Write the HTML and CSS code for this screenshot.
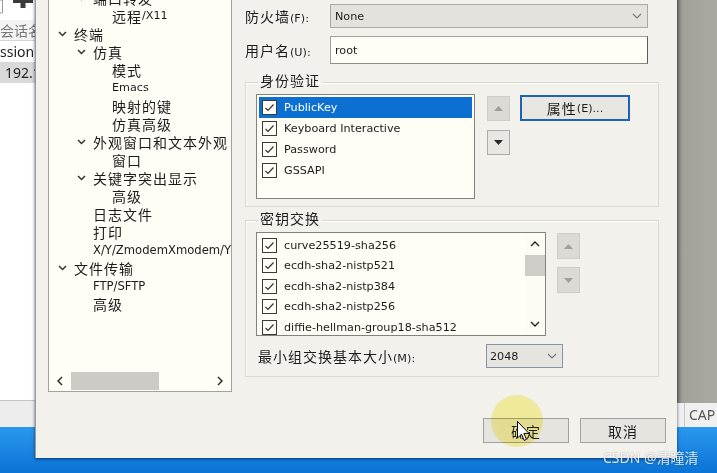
FILE: index.html
```html
<!DOCTYPE html>
<html>
<head>
<meta charset="utf-8">
<link rel="stylesheet" href="styles.css">
</head>
<body>
<div class="desktop">
  <div class="taskbar"></div>

  <div class="bgapp">
    <div class="bg-toolbar">
      <svg width="36" height="20" viewBox="0 0 36 20"><path d="M0 0H2.5V13H0" fill="none" stroke="#9a9a9a" stroke-width="1"/><rect x="13" y="0" width="20" height="3" fill="#3a3a3a"/><rect x="20.5" y="0" width="5" height="8" fill="#3a3a3a"/></svg>
    </div>
    <div class="bg-tab"><span class="zh">会话名</span></div>
    <div class="bg-row">ssion</div>
    <div class="bg-row sel">192.168</div>
    <div class="bg-spacer"></div>
    <div class="bg-foot"></div>
  </div>

  <div class="rightapp">
    <div class="ra-dark"></div>
    <div class="ra-status"><span class="ra-gap"></span><span class="ra-cap">CAP</span></div>
  </div>

  <div class="dialog">
    <div class="dlg-main">
      <div class="tree">
        <div class="tree-items">
          <div class="node l0"><i class="tw"><svg viewBox="0 0 9 6"><path d="M1 1l3.5 3.5L8 1"/></svg></i><span class="zh">连接</span></div>
          <div class="node l1"><i class="tw"><svg viewBox="0 0 9 6"><path d="M1 1l3.5 3.5L8 1"/></svg></i><span class="zh">端口转发</span></div>
          <div class="node l2"><i class="tw"></i><span class="zh">远程</span><span>/X11</span></div>
          <div class="node l0"><i class="tw"><svg viewBox="0 0 9 6"><path d="M1 1l3.5 3.5L8 1"/></svg></i><span class="zh">终端</span></div>
          <div class="node l1"><i class="tw"><svg viewBox="0 0 9 6"><path d="M1 1l3.5 3.5L8 1"/></svg></i><span class="zh">仿真</span></div>
          <div class="node l2"><i class="tw"></i><span class="zh">模式</span></div>
          <div class="node l2"><i class="tw"></i><span>Emacs</span></div>
          <div class="node l2"><i class="tw"></i><span class="zh">映射的键</span></div>
          <div class="node l2"><i class="tw"></i><span class="zh">仿真高级</span></div>
          <div class="node l1"><i class="tw"><svg viewBox="0 0 9 6"><path d="M1 1l3.5 3.5L8 1"/></svg></i><span class="zh">外观窗口和文本外观</span></div>
          <div class="node l2"><i class="tw"></i><span class="zh">窗口</span></div>
          <div class="node l1"><i class="tw"><svg viewBox="0 0 9 6"><path d="M1 1l3.5 3.5L8 1"/></svg></i><span class="zh">关键字突出显示</span></div>
          <div class="node l2"><i class="tw"></i><span class="zh">高级</span></div>
          <div class="node l1"><i class="tw"></i><span class="zh">日志文件</span></div>
          <div class="node l1"><i class="tw"></i><span class="zh">打印</span></div>
          <div class="node l1"><i class="tw"></i><span class="big">X/Y/ZmodemXmodem/Y</span></div>
          <div class="node l0"><i class="tw"><svg viewBox="0 0 9 6"><path d="M1 1l3.5 3.5L8 1"/></svg></i><span class="zh">文件传输</span></div>
          <div class="node l1"><i class="tw"></i><span class="big">FTP/SFTP</span></div>
          <div class="node l1"><i class="tw"></i><span class="zh">高级</span></div>
        </div>
        <div class="hscroll">
          <i class="harr"><svg viewBox="0 0 6 10"><path d="M5 1L1 5l4 4"/></svg></i>
          <div class="hthumb"></div>
          <div class="hspace"></div>
          <i class="harr"><svg viewBox="0 0 6 10"><path d="M1 1l4 4-4 4"/></svg></i>
        </div>
      </div>

      <div class="panel">
        <div class="frow">
          <div class="flabel"><span class="zh">防火墙</span>(F):</div>
          <div class="combo"><span>None</span><svg class="cchev" viewBox="0 0 10 6"><path d="M1 1l4 4 4-4"/></svg></div>
        </div>
        <div class="frow r2">
          <div class="flabel"><span class="zh">用户名</span>(U):</div>
          <div class="field">root</div>
        </div>

        <fieldset class="group g1">
          <legend><span class="zh">身份验证</span></legend>
          <div class="ginner">
            <div class="lbox">
              <div class="item sel"><span class="cb"><svg viewBox="0 0 13 13"><path d="M2.5 7l2.5 2.5L10.5 3.5"/></svg></span>PublicKey</div>
              <div class="item"><span class="cb"><svg viewBox="0 0 13 13"><path d="M2.5 7l2.5 2.5L10.5 3.5"/></svg></span>Keyboard Interactive</div>
              <div class="item"><span class="cb"><svg viewBox="0 0 13 13"><path d="M2.5 7l2.5 2.5L10.5 3.5"/></svg></span>Password</div>
              <div class="item"><span class="cb"><svg viewBox="0 0 13 13"><path d="M2.5 7l2.5 2.5L10.5 3.5"/></svg></span>GSSAPI</div>
            </div>
            <div class="udcol">
              <div class="ud"><svg viewBox="0 0 9 5"><path d="M0 5L4.5 0 9 5Z"/></svg></div>
              <div class="ud on"><svg viewBox="0 0 9 5"><path d="M0 0L4.5 5 9 0Z"/></svg></div>
            </div>
            <div class="propbtn"><span class="zh">属性</span>(E)...</div>
          </div>
        </fieldset>

        <fieldset class="group g2">
          <legend><span class="zh">密钥交换</span></legend>
          <div class="ginner">
            <div class="lbox2">
              <div class="items">
                <div class="item i2"><span class="cb"><svg viewBox="0 0 13 13"><path d="M2.5 7l2.5 2.5L10.5 3.5"/></svg></span>curve25519-sha256</div>
                <div class="item i2"><span class="cb"><svg viewBox="0 0 13 13"><path d="M2.5 7l2.5 2.5L10.5 3.5"/></svg></span>ecdh-sha2-nistp521</div>
                <div class="item i2"><span class="cb"><svg viewBox="0 0 13 13"><path d="M2.5 7l2.5 2.5L10.5 3.5"/></svg></span>ecdh-sha2-nistp384</div>
                <div class="item i2"><span class="cb"><svg viewBox="0 0 13 13"><path d="M2.5 7l2.5 2.5L10.5 3.5"/></svg></span>ecdh-sha2-nistp256</div>
                <div class="item i2"><span class="cb"><svg viewBox="0 0 13 13"><path d="M2.5 7l2.5 2.5L10.5 3.5"/></svg></span>diffie-hellman-group18-sha512</div>
              </div>
              <div class="vsb">
                <i class="varr"><svg viewBox="0 0 10 6"><path d="M1 5l4-4 4 4"/></svg></i>
                <div class="vthumb"></div>
                <div class="vspace"></div>
                <i class="varr"><svg viewBox="0 0 10 6"><path d="M1 1l4 4 4-4"/></svg></i>
              </div>
            </div>
            <div class="udcol u2">
              <div class="ud t"><svg viewBox="0 0 9 5"><path d="M0 5L4.5 0 9 5Z"/></svg></div>
              <div class="ud t"><svg viewBox="0 0 9 5"><path d="M0 0L4.5 5 9 0Z"/></svg></div>
            </div>
          </div>
          <div class="minrow">
            <div class="minlabel"><span class="zh">最小组交换基本大小</span>(M):</div>
            <div class="combo2"><span>2048</span><svg class="cchev" viewBox="0 0 10 6"><path d="M1 1l4 4 4-4"/></svg></div>
          </div>
        </fieldset>
      </div>
    </div>
    <div class="dlg-foot">
      <div class="btn"><span class="zh">确定</span></div>
      <div class="btn"><span class="zh">取消</span></div>
    </div>
  </div>

  <div class="halo"></div>
  <svg class="cursor" width="13" height="21" viewBox="0 0 13 21"><path d="M0.5 0.5V17l4-3.8 2.6 6.2 2.4-1-2.6-6H12Z" fill="#fff" stroke="#000" stroke-width="1"/></svg>
  <div class="watermark">CSDN @<span class="wzh">清瞳清</span></div>
</div>
</body>
</html>
```

FILE: styles.css
```css
html, body {
  margin: 0;
  padding: 0;
}
body {
  width: 717px;
  height: 473px;
  overflow: hidden;
  font-family: "DejaVu Sans", "Noto Sans CJK SC", sans-serif;
  font-size: 11.2px;
  color: #1c1c1c;
}
.zh {
  font-family: "Noto Sans CJK SC", sans-serif;
  font-size: 14px;
  letter-spacing: 1px;
}
.desktop {
  position: relative;
  width: 717px;
  height: 473px;
  overflow: hidden;
  background: #ffffff;
}
.taskbar {
  position: absolute;
  left: 0;
  right: 0;
  top: 427px;
  bottom: 0;
  background: linear-gradient(#2a98ef, #0a73d5);
}

/* background app, left */
.bgapp {
  position: absolute;
  left: 0;
  top: 0;
  width: 36px;
  height: 427px;
  display: flex;
  flex-direction: column;
  background: #ffffff;
  overflow: hidden;
}
.bg-toolbar {
  height: 20px;
}
.bg-toolbar svg {
  display: block;
}
.bg-tab {
  height: 20px;
  line-height: 20px;
  border-bottom: 1px solid #d4d4d4;
  background: #f4f4f4;
  color: #777;
  white-space: nowrap;
}
.bg-tab .zh {
  font-size: 14px;
  letter-spacing: 0;
}
.bg-row {
  height: 21px;
  line-height: 21px;
  font-family: "Noto Sans", sans-serif;
  font-size: 14px;
  color: #222;
  white-space: nowrap;
}
.bg-row.sel {
  background: #d9d9d9;
  padding-left: 5px;
}
.bg-spacer {
  flex: 1;
}
.bg-foot {
  height: 26px;
  border-top: 1px solid #c4c4c4;
  background: #ededed;
}

/* right background app */
.rightapp {
  position: absolute;
  left: 677px;
  top: 0;
  width: 40px;
  height: 427px;
  display: flex;
  flex-direction: column;
}
.ra-dark {
  flex: 1;
  background: linear-gradient(to right, #77766f, #a2a19a 6px, #aaa9a2);
}
.ra-status {
  height: 24px;
  display: flex;
  background: #f0f0f0;
}
.ra-gap {
  width: 7px;
  border-right: 1px solid #c6c6c6;
}
.ra-cap {
  padding-left: 4px;
  font-family: "Noto Sans", sans-serif;
  font-size: 14px;
  line-height: 24px;
  color: #555;
}

/* dialog */
.dialog {
  position: absolute;
  left: 35px;
  top: -40px;
  width: 642px;
  height: 498px;
  box-sizing: border-box;
  background: #f2f1ec;
  border-left: 1px solid #9b9a95;
  box-shadow: 0 1px 3px rgba(0, 20, 60, 0.7);
  padding: 10px 11px 0 12px;
}
.dlg-main {
  display: flex;
  gap: 13px;
  height: 422px;
}

/* tree */
.tree {
  width: 184px;
  box-sizing: border-box;
  border: 1px solid #a3a19b;
  background: #fffdf6;
  display: flex;
  flex-direction: column;
}
.tree-items {
  flex: 1;
  overflow: hidden;
}
.node {
  height: 18px;
  display: flex;
  align-items: center;
  white-space: nowrap;
  line-height: 16px;
}
.node.l0 { padding-left: 6px; }
.node.l1 { padding-left: 25px; }
.node.l2 { padding-left: 44px; }
.tw {
  width: 19px;
  flex: none;
  display: flex;
  align-items: center;
}
.tw svg {
  width: 9px;
  height: 6px;
  margin-left: 3px;
  fill: none;
  stroke: #333;
  stroke-width: 1.5;
}
.big {
  font-size: 11.6px;
}
.hscroll {
  height: 20px;
  display: flex;
  align-items: center;
}
.harr {
  width: 22px;
  height: 18px;
  display: flex;
  align-items: center;
  justify-content: center;
  flex: none;
}
.harr svg {
  width: 6px;
  height: 10px;
  fill: none;
  stroke: #222;
  stroke-width: 1.4;
}
.hthumb {
  width: 88px;
  height: 18px;
  background: #cdcbc6;
}
.hspace {
  flex: 1;
}

/* right panel */
.panel {
  width: 414px;
  padding-top: 34px;
}
.frow {
  display: flex;
  align-items: center;
}
.frow.r2 {
  margin-top: 8px;
}
.flabel {
  width: 85px;
  white-space: nowrap;
}
.combo {
  width: 318px;
  height: 24px;
  box-sizing: border-box;
  border: 1px solid #aba9a2;
  background: #e4e2dc;
  display: flex;
  align-items: center;
  padding-left: 4px;
}
.cchev {
  width: 10px;
  height: 6px;
  margin-left: auto;
  margin-right: 5px;
  fill: none;
  stroke: #7a7a7a;
  stroke-width: 1.2;
}
.field {
  width: 318px;
  height: 28px;
  box-sizing: border-box;
  border: 1px solid #a3a19b;
  border-right-color: #5e5d5a;
  border-bottom-color: #8d8b86;
  background: #fffdf6;
  display: flex;
  align-items: center;
  padding-left: 4px;
}

/* groups */
.group {
  margin: 0;
  border: 1px solid #dad8d1;
  box-shadow: inset 1px 1px 0 #ffffff;
  padding: 2px 0 7px 10px;
  min-width: 0;
}
.group legend {
  padding: 0 2px 4px;
  margin-left: 2px;
  line-height: 16px;
  height: 16px;
}
.g1 {
  margin-top: 8px;
}
.g2 {
  margin-top: 3px;
  padding-bottom: 8px;
}
.ginner {
  display: flex;
  align-items: flex-start;
}
.lbox {
  width: 219px;
  height: 105px;
  box-sizing: border-box;
  border: 1px solid #83827e;
  background: #fffdf6;
  padding: 2px;
}
.item {
  height: 21px;
  display: flex;
  align-items: center;
  padding-left: 3px;
  white-space: nowrap;
}
.item.i2 {
  height: 20.5px;
}
.item.sel {
  background: #0c6fd2;
  color: #ffffff;
}
.cb {
  width: 15px;
  height: 15px;
  box-sizing: border-box;
  border: 1px solid #3a3a3a;
  background: #fffdf6;
  margin-right: 7px;
  flex: none;
  display: flex;
}
.cb svg {
  width: 13px;
  height: 13px;
  fill: none;
  stroke: #333;
  stroke-width: 1.2;
}
.udcol {
  display: flex;
  flex-direction: column;
  gap: 9px;
  margin-left: 12px;
  margin-top: 2px;
}
.udcol.u2 {
  margin-left: 11px;
  margin-top: 1px;
  gap: 8px;
}
.ud {
  width: 23px;
  height: 25px;
  box-sizing: border-box;
  border: 1px solid #cfcdc6;
  background: #dcdad4;
  display: flex;
  align-items: center;
  justify-content: center;
}
.ud.t {
  height: 26px;
}
.ud svg {
  width: 9px;
  height: 5px;
  fill: #a19f99;
}
.ud.on {
  background: #e9e7e1;
  border-color: #aeaca6;
}
.ud.on svg {
  fill: #2a2a2a;
}
.propbtn {
  width: 110px;
  height: 26px;
  box-sizing: border-box;
  margin-left: 10px;
  margin-top: 1px;
  border: 2px solid #1d62b3;
  background: #e8e6e0;
  display: flex;
  align-items: center;
  justify-content: center;
  white-space: nowrap;
}
.lbox2 {
  width: 290px;
  height: 104px;
  box-sizing: border-box;
  border: 1px solid #83827e;
  background: #fffdf6;
  display: flex;
}
.items {
  flex: 1;
  padding: 2px;
  overflow: hidden;
}
.vsb {
  width: 20px;
  display: flex;
  flex-direction: column;
  background: #fdfbf4;
}
.varr {
  height: 22px;
  display: flex;
  align-items: center;
  justify-content: center;
  flex: none;
}
.varr svg {
  width: 10px;
  height: 6px;
  fill: none;
  stroke: #222;
  stroke-width: 1.4;
}
.vthumb {
  height: 21px;
  background: #cfcdc8;
}
.vspace {
  flex: 1;
}
.minrow {
  display: flex;
  align-items: center;
  margin-top: 8px;
}
.minlabel {
  width: 230px;
  box-sizing: border-box;
  padding-left: 2px;
  white-space: nowrap;
}
.combo2 {
  width: 77px;
  height: 24px;
  box-sizing: border-box;
  border: 1px solid #8795a6;
  background: #e6e4de;
  display: flex;
  align-items: center;
  padding-left: 3px;
}

/* footer */
.dlg-foot {
  display: flex;
  justify-content: flex-end;
  gap: 11px;
  margin-top: 26px;
}
.btn {
  width: 86px;
  height: 25px;
  box-sizing: border-box;
  border: 1px solid #a3a19b;
  background: #e6e4de;
  display: flex;
  align-items: center;
  justify-content: center;
}

/* overlays */
.halo {
  position: absolute;
  left: 491px;
  top: 395px;
  width: 52px;
  height: 52px;
  border-radius: 50%;
  background: radial-gradient(#fcf7a6 55%, #faf6bc);
  mix-blend-mode: multiply;
}
.cursor {
  position: absolute;
  left: 517px;
  top: 421px;
}
.watermark {
  position: absolute;
  left: 603px;
  top: 447px;
  font-family: "Noto Sans", sans-serif;
  font-size: 14px;
  line-height: 20px;
  color: rgba(255, 255, 255, 0.85);
  text-shadow: 0 0 2px rgba(0, 0, 0, 0.35);
  white-space: nowrap;
}
.wzh {
  font-family: "Noto Sans CJK SC", sans-serif;
  font-size: 14px;
}
```
